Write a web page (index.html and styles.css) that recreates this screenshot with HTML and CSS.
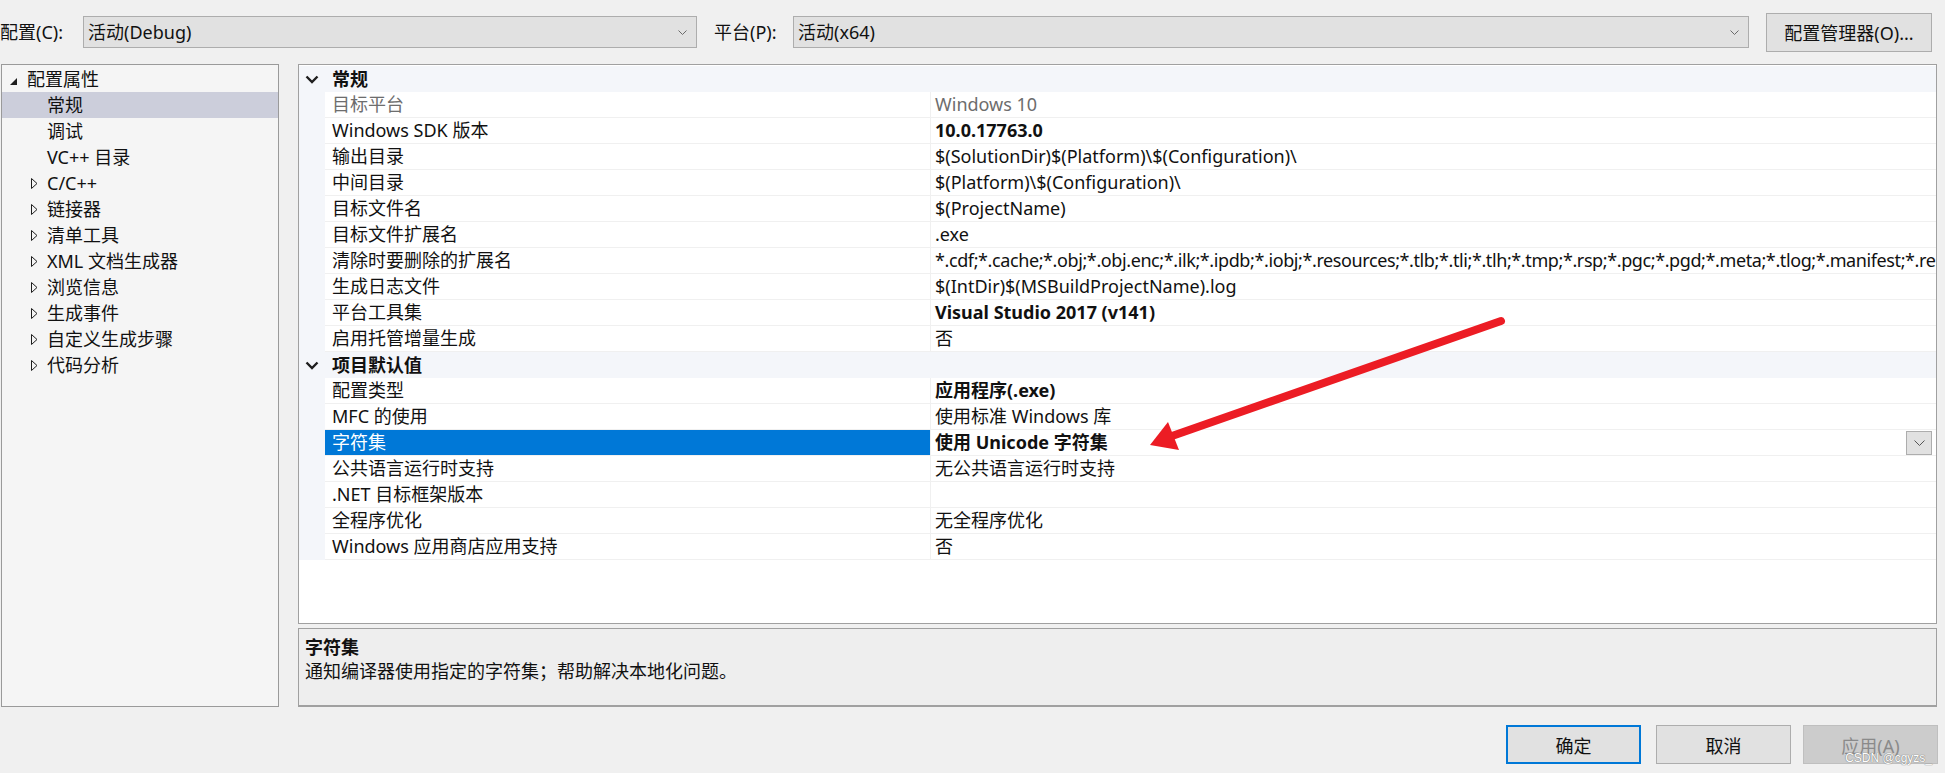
FILE: index.html
```html
<!DOCTYPE html>
<html lang="zh-CN">
<head>
<meta charset="utf-8">
<title>属性页</title>
<link rel="stylesheet" href="styles.css">
</head>
<body>
<div class="window">
  <div class="topbar">
    <span class="lbl lbl-config">配置(C):</span>
    <div class="combo combo-config">
      <span class="combo-text">活动(Debug)</span>
      <svg class="combo-chev" width="9" height="5" viewBox="0 0 9 5"><path d="M0.5 0.5 L4.5 4.5 L8.5 0.5" fill="none" stroke="#6a6a6a" stroke-width="1"/></svg>
    </div>
    <span class="lbl lbl-platform">平台(P):</span>
    <div class="combo combo-platform">
      <span class="combo-text">活动(x64)</span>
      <svg class="combo-chev" width="9" height="5" viewBox="0 0 9 5"><path d="M0.5 0.5 L4.5 4.5 L8.5 0.5" fill="none" stroke="#6a6a6a" stroke-width="1"/></svg>
    </div>
    <button class="btn btn-mgr">配置管理器(O)...</button>
  </div>

  <div class="main">
    <div class="tree">
      <div class="trow lvl0">
        <span class="ticon"><svg width="7" height="7" viewBox="0 0 7 7"><polygon points="7,0 7,7 0,7" fill="#1e1e1e"/></svg></span>
        <span>配置属性</span>
      </div>
      <div class="trow lvl1 tsel"><span class="ticon"></span><span>常规</span></div>
      <div class="trow lvl1"><span class="ticon"></span><span>调试</span></div>
      <div class="trow lvl1"><span class="ticon"></span><span>VC++ 目录</span></div>
      <div class="trow lvl1"><span class="ticon"><svg width="7" height="11" viewBox="0 0 7 11"><polygon points="0.5,0.5 6,5.5 0.5,10.5" fill="none" stroke="#1e1e1e" stroke-width="1"/></svg></span><span>C/C++</span></div>
      <div class="trow lvl1"><span class="ticon"><svg width="7" height="11" viewBox="0 0 7 11"><polygon points="0.5,0.5 6,5.5 0.5,10.5" fill="none" stroke="#1e1e1e" stroke-width="1"/></svg></span><span>链接器</span></div>
      <div class="trow lvl1"><span class="ticon"><svg width="7" height="11" viewBox="0 0 7 11"><polygon points="0.5,0.5 6,5.5 0.5,10.5" fill="none" stroke="#1e1e1e" stroke-width="1"/></svg></span><span>清单工具</span></div>
      <div class="trow lvl1"><span class="ticon"><svg width="7" height="11" viewBox="0 0 7 11"><polygon points="0.5,0.5 6,5.5 0.5,10.5" fill="none" stroke="#1e1e1e" stroke-width="1"/></svg></span><span>XML 文档生成器</span></div>
      <div class="trow lvl1"><span class="ticon"><svg width="7" height="11" viewBox="0 0 7 11"><polygon points="0.5,0.5 6,5.5 0.5,10.5" fill="none" stroke="#1e1e1e" stroke-width="1"/></svg></span><span>浏览信息</span></div>
      <div class="trow lvl1"><span class="ticon"><svg width="7" height="11" viewBox="0 0 7 11"><polygon points="0.5,0.5 6,5.5 0.5,10.5" fill="none" stroke="#1e1e1e" stroke-width="1"/></svg></span><span>生成事件</span></div>
      <div class="trow lvl1"><span class="ticon"><svg width="7" height="11" viewBox="0 0 7 11"><polygon points="0.5,0.5 6,5.5 0.5,10.5" fill="none" stroke="#1e1e1e" stroke-width="1"/></svg></span><span>自定义生成步骤</span></div>
      <div class="trow lvl1"><span class="ticon"><svg width="7" height="11" viewBox="0 0 7 11"><polygon points="0.5,0.5 6,5.5 0.5,10.5" fill="none" stroke="#1e1e1e" stroke-width="1"/></svg></span><span>代码分析</span></div>
    </div>

    <div class="rightcol">
      <div class="grid">
        <div class="cat">
          <span class="gut"><svg width="14" height="9" viewBox="0 0 14 9"><path d="M1.5 1.5 L7 7 L12.5 1.5" fill="none" stroke="#1e1e1e" stroke-width="2.4"/></svg></span>
          <span class="cat-text">常规</span>
        </div>
        <div class="row"><span class="gut"></span><span class="name ro">目标平台</span><span class="value ro">Windows 10</span></div>
        <div class="row"><span class="gut"></span><span class="name">Windows SDK 版本</span><span class="value b">10.0.17763.0</span></div>
        <div class="row"><span class="gut"></span><span class="name">输出目录</span><span class="value">$(SolutionDir)$(Platform)\$(Configuration)\</span></div>
        <div class="row"><span class="gut"></span><span class="name">中间目录</span><span class="value">$(Platform)\$(Configuration)\</span></div>
        <div class="row"><span class="gut"></span><span class="name">目标文件名</span><span class="value">$(ProjectName)</span></div>
        <div class="row"><span class="gut"></span><span class="name">目标文件扩展名</span><span class="value">.exe</span></div>
        <div class="row"><span class="gut"></span><span class="name">清除时要删除的扩展名</span><span class="value tight">*.cdf;*.cache;*.obj;*.obj.enc;*.ilk;*.ipdb;*.iobj;*.resources;*.tlb;*.tli;*.tlh;*.tmp;*.rsp;*.pgc;*.pgd;*.meta;*.tlog;*.manifest;*.res;*.pch;*.exp;*.idb;*.rep;*.xdc;*.pdb;*_manifest.rc;*.bsc;*.sbr;*.xml;*.metagen;*.bi</span></div>
        <div class="row"><span class="gut"></span><span class="name">生成日志文件</span><span class="value">$(IntDir)$(MSBuildProjectName).log</span></div>
        <div class="row"><span class="gut"></span><span class="name">平台工具集</span><span class="value b">Visual Studio 2017 (v141)</span></div>
        <div class="row"><span class="gut"></span><span class="name">启用托管增量生成</span><span class="value">否</span></div>
        <div class="cat">
          <span class="gut"><svg width="14" height="9" viewBox="0 0 14 9"><path d="M1.5 1.5 L7 7 L12.5 1.5" fill="none" stroke="#1e1e1e" stroke-width="2.4"/></svg></span>
          <span class="cat-text">项目默认值</span>
        </div>
        <div class="row"><span class="gut"></span><span class="name">配置类型</span><span class="value b">应用程序(.exe)</span></div>
        <div class="row"><span class="gut"></span><span class="name">MFC 的使用</span><span class="value">使用标准 Windows 库</span></div>
        <div class="row sel"><span class="gut"></span><span class="name">字符集</span><span class="value b"><span class="vtext">使用 Unicode 字符集</span><span class="ddbtn"><svg width="11" height="6" viewBox="0 0 11 6"><path d="M0.5 0.5 L5.5 5.5 L10.5 0.5" fill="none" stroke="#555" stroke-width="1"/></svg></span></span></div>
        <div class="row"><span class="gut"></span><span class="name">公共语言运行时支持</span><span class="value">无公共语言运行时支持</span></div>
        <div class="row"><span class="gut"></span><span class="name">.NET 目标框架版本</span><span class="value"></span></div>
        <div class="row"><span class="gut"></span><span class="name">全程序优化</span><span class="value">无全程序优化</span></div>
        <div class="row"><span class="gut"></span><span class="name">Windows 应用商店应用支持</span><span class="value">否</span></div>
      </div>
      <div class="desc">
        <div class="desc-title">字符集</div>
        <div class="desc-text">通知编译器使用指定的字符集；帮助解决本地化问题。</div>
      </div>
    </div>
  </div>

  <div class="footer">
    <button class="btn fbtn ok">确定</button>
    <button class="btn fbtn cancel">取消</button>
    <button class="btn fbtn apply">应用(A)</button>
  </div>

  <svg class="arrow" width="1945" height="773" viewBox="0 0 1945 773">
    <line x1="1501" y1="321" x2="1172" y2="436" stroke="#ec1c24" stroke-width="8" stroke-linecap="round"/>
    <polygon points="1150,445 1168,422 1179,450" fill="#ec1c24"/>
  </svg>
  <span class="watermark">CSDN @cgyzs_</span>
</div>
</body>
</html>
```

FILE: styles.css
```css
html, body {
  margin: 0;
  padding: 0;
}
body {
  background: #f0f0f0;
  font-family: "Noto Sans", "Noto Sans CJK SC", sans-serif;
  font-size: 18px;
  color: #111;
}
.window {
  position: relative;
  width: 1945px;
  height: 773px;
  overflow: hidden;
  background: #f0f0f0;
}

/* top bar */
.topbar {
  height: 64px;
  display: flex;
  align-items: center;
}
.lbl {
  line-height: 24px;
  white-space: nowrap;
}
.lbl-config {
  width: 83px;
  flex: 0 0 83px;
}
.lbl-platform {
  margin-left: 17px;
  width: 79px;
  flex: 0 0 79px;
}
.combo {
  box-sizing: border-box;
  height: 32px;
  background: #e1e1e1;
  border: 1px solid #adadad;
  display: flex;
  align-items: center;
  padding: 0 9px 0 4px;
}
.combo-config { width: 614px; flex: 0 0 614px; }
.combo-platform { width: 956px; flex: 0 0 956px; }
.combo-text {
  flex: 1;
  line-height: 24px;
  white-space: nowrap;
}
.combo-chev { display: block; }

.btn {
  font-family: "Noto Sans", "Noto Sans CJK SC", sans-serif;
  font-size: 18px;
  color: #111;
  background: #e1e1e1;
  border: 1px solid #adadad;
  box-sizing: border-box;
  padding: 0;
  margin: 0;
}
.btn-mgr {
  margin-left: 17px;
  width: 166px;
  height: 39px;
}

/* main */
.main {
  display: flex;
  height: 643px;
}
.tree {
  box-sizing: border-box;
  margin-left: 1px;
  width: 278px;
  flex: 0 0 278px;
  height: 643px;
  background: #f5f5f5;
  border: 1px solid #9a9a9a;
  padding: 1px 0 0 0;
}
.trow {
  height: 26px;
  line-height: 26px;
  display: flex;
  align-items: center;
  white-space: nowrap;
}
.trow.lvl0 { padding-left: 8px; }
.trow.lvl1 { padding-left: 28px; }
.ticon {
  width: 17px;
  flex: 0 0 17px;
  display: flex;
  align-items: center;
}
.ticon svg { display: block; }
.trow.lvl0 .ticon svg { margin-top: 4px; }
.trow.lvl1 .ticon svg { margin-left: 1px; margin-top: 1px; }
.tsel { background: #cccedb; }

.rightcol {
  margin-left: 19px;
  width: 1639px;
  flex: 0 0 1639px;
  display: flex;
  flex-direction: column;
  gap: 4px;
}
.grid {
  box-sizing: border-box;
  height: 560px;
  flex: 0 0 560px;
  background: #fff;
  border: 1px solid #a0a0a0;
  padding-top: 1px;
  overflow: hidden;
}
.cat {
  display: flex;
  height: 26px;
  background: #f4f6fa;
  align-items: center;
}
.gut {
  width: 26px;
  flex: 0 0 26px;
  align-self: stretch;
  background: #f4f6fa;
  display: flex;
  align-items: center;
  justify-content: center;
}
.gut svg { display: block; }
.cat-text {
  padding-left: 7px;
  font-weight: 700;
  line-height: 26px;
}
.row {
  display: flex;
  height: 26px;
}
.name, .value {
  box-sizing: border-box;
  height: 26px;
  line-height: 25px;
  border-bottom: 1px solid #f0f0f0;
  white-space: nowrap;
  overflow: hidden;
}
.name {
  width: 606px;
  flex: 0 0 606px;
  padding-left: 7px;
  border-right: 1px solid #f0f0f0;
}
.value {
  flex: 1;
  padding-left: 4px;
  min-width: 0;
}
.value.tight { letter-spacing: -0.4px; }
.ro { color: #6d6d6d; }
.b { font-weight: 700; }
.row.sel .name {
  background: #0078d7;
  color: #fff;
}
.row.sel .value {
  display: flex;
  align-items: center;
}
.vtext { flex: 1; }
.ddbtn {
  box-sizing: border-box;
  width: 26px;
  height: 24px;
  margin-right: 4px;
  background: #e1e1e1;
  border: 1px solid #adadad;
  display: flex;
  align-items: center;
  justify-content: center;
}
.ddbtn svg { display: block; }

.desc {
  box-sizing: border-box;
  flex: 1;
  background: #eeeeee;
  border: 1px solid #a0a0a0;
  border-bottom-width: 2px;
  padding: 6px 0 0 6px;
}
.desc-title {
  font-weight: 700;
  line-height: 24px;
}
.desc-text {
  line-height: 24px;
}

/* footer */
.footer {
  height: 66px;
  display: flex;
  justify-content: flex-end;
  align-items: flex-start;
  padding: 18px 7px 0 0;
  box-sizing: border-box;
}
.fbtn {
  width: 135px;
  height: 39px;
}
.fbtn.ok {
  border: 2px solid #0078d7;
  margin-right: 15px;
}
.fbtn.cancel {
  margin-right: 12px;
}
.fbtn.apply {
  background: #cccccc;
  border-color: #bfbfbf;
  color: #8a8a8a;
}

.arrow {
  position: absolute;
  left: 0;
  top: 0;
  pointer-events: none;
}
.watermark {
  position: absolute;
  right: 13px;
  bottom: 8px;
  font-family: "Liberation Sans", sans-serif;
  font-size: 12px;
  color: #fff;
  text-shadow: 0 0 1px #777, 0 0 1px #777;
  pointer-events: none;
}
```
